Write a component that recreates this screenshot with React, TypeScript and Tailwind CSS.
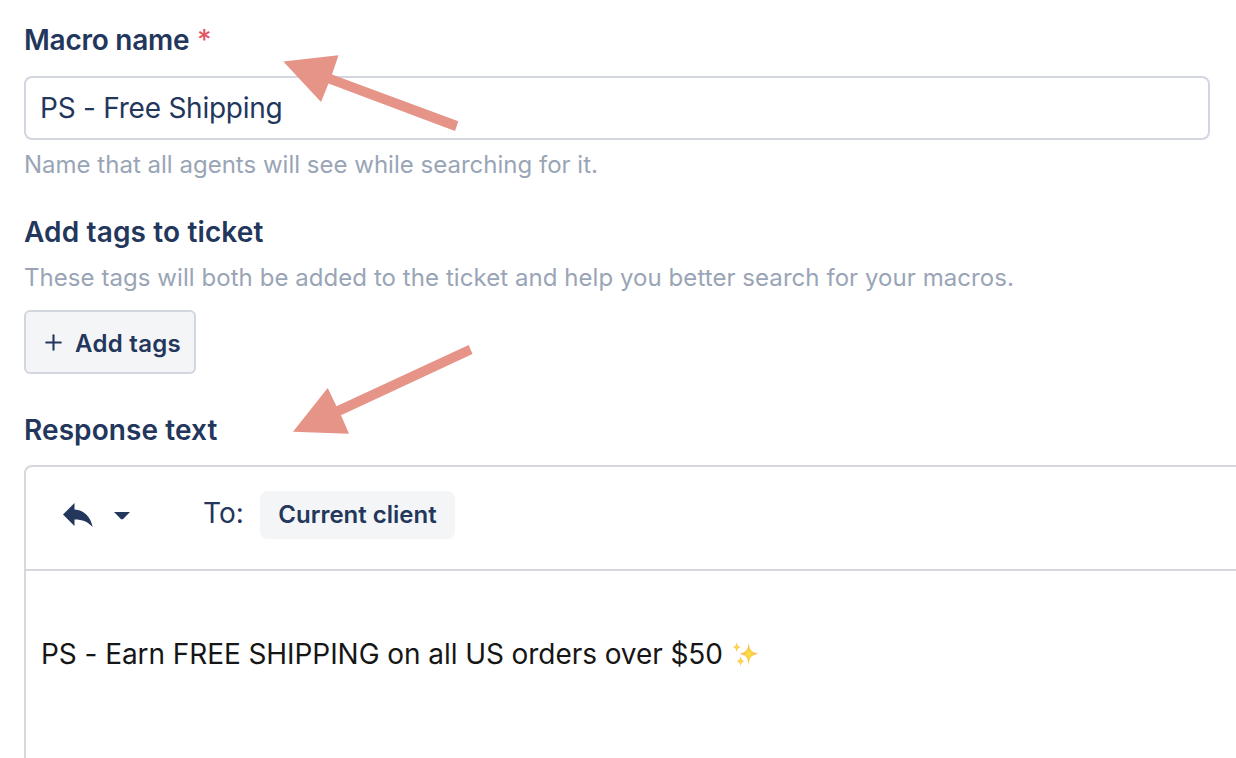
import { Plus } from "lucide-react";

function Sparkles() {
  return (
    <svg width="26" height="26" viewBox="0 0 26 26" className="shrink-0" role="img" aria-label="sparkles">
      <defs>
        <radialGradient id="spark">
          <stop offset="0" stopColor="#fde545" />
          <stop offset="0.5" stopColor="#fac748" />
          <stop offset="1" stopColor="#f4ac72" />
        </radialGradient>
      </defs>
      <g fill="url(#spark)">
        <path d="M15.7 1.5C16.4 8.7 17.7 10.8 25.2 12.7C17.7 14.3 16.4 16.5 15.7 24.5C14.9 16.5 13.5 14.3 6.8 12.7C13.5 10.8 14.9 8.7 15.7 1.5Z" />
        <path d="M3.8 0.8C4.2 4.3 4.8 5.3 7.6 6.2C4.8 7.1 4.2 8.1 3.8 11.6C3.3 8.1 2.7 7.1 0.2 6.2C2.7 5.3 3.3 4.3 3.8 0.8Z" />
        <path d="M7.5 15C7.9 18.3 8.7 19.4 11.3 20.3C8.7 21.1 7.9 22.2 7.5 25.8C7.1 22.2 6.3 21.1 3.8 20.3C6.3 19.4 7.1 18.3 7.5 15Z" />
      </g>
    </svg>
  );
}

export default function App() {
  return (
    <div className="relative h-[758px] w-full overflow-hidden bg-white pl-6 pt-5 font-['Inter',sans-serif] text-[#23365b] antialiased [font-variant-ligatures:none]">
      {/* Macro name */}
      <section className="flex flex-col">
        <label htmlFor="macro-name" className="text-[28px] font-semibold leading-10 tracking-[-0.26px]">
          Macro name <span className="ml-px font-medium text-[#e25563]">*</span>
        </label>
        <input
          id="macro-name"
          type="text"
          defaultValue="PS - Free Shipping"
          className="mt-4 h-16 w-[1186px] rounded-lg border-2 border-[#d2d6de] bg-white px-3.5 text-[28px] tracking-[-0.24px] outline-none"
        />
        <p className="mt-[7px] text-2xl leading-9 tracking-[0.01px] text-[#99a5b6]">
          Name that all agents will see while searching for it.
        </p>
      </section>

      {/* Tags */}
      <section className="mt-[29px]">
        <h2 className="text-[28px] font-semibold leading-10 tracking-[0.14px]">Add tags to ticket</h2>
        <p className="mt-2 text-2xl leading-9 tracking-[0.06px] text-[#99a5b6]">
          These tags will both be added to the ticket and help you better search for your macros.
        </p>
        <button className="mt-[14px] flex h-16 w-[172px] items-center rounded-md border-2 border-[#d2d6de] bg-[#f4f5f7] pl-[15px] text-2xl font-semibold">
          <Plus size={25} strokeWidth={2} className="mr-[9px] mt-px shrink-0" />
          <span className="mt-[3px] whitespace-nowrap tracking-[0.3px]">Add tags</span>
        </button>
      </section>

      {/* Response editor */}
      <section className="mt-9">
        <h2 className="text-[28px] font-semibold leading-10 tracking-[0.08px]">Response text</h2>
        <div className="mt-[15px] h-[320px] rounded-tl-lg border-l-2 border-t-2 border-[#d5d8dd]">
          <div className="flex h-[104px] items-center border-b-2 border-[#d5d8dd] pl-[37px]">
            <svg width="30" height="24" viewBox="0 0 30 24" className="mt-[-7px] shrink-0" fill="currentColor">
              <path d="M0 11.5L11.5 0V6.4C21.5 7.2 27.5 13.5 29.6 24C25 18.6 19.6 16.4 11.5 16.4V23Z" />
            </svg>
            <svg width="16" height="8" viewBox="0 0 16 8" className="ml-[21px] mt-[-5px] shrink-0" fill="currentColor">
              <path d="M0 0H16L9.4 6.7Q8 7.9 6.6 6.7Z" />
            </svg>
            <span className="ml-[73px] mt-[-11px] w-10 shrink-0 whitespace-nowrap text-[28px] leading-10">To:</span>
            <span className="ml-[17px] mt-[-7px] flex h-12 w-[195px] items-center justify-center rounded-lg bg-[#f4f5f7] text-2xl font-semibold">
              Current client
            </span>
          </div>
          <div className="flex items-center pl-[15px] pt-[63px] text-[28px] leading-10 tracking-[-0.07px] text-[#161616]">
            <span className="mr-2.5">PS - Earn FREE SHIPPING on all US orders over $50</span>
            <Sparkles />
          </div>
        </div>
      </section>

      {/* Annotation arrows */}
      <svg width="1236" height="758" viewBox="0 0 1236 758" className="pointer-events-none absolute left-0 top-0" fill="#e69388">
        <path d="M283.3 61.5L338.5 55.3L332 74.5L458.3 121.3L455 131L328.5 83.5L321 102Z" />
        <path d="M293 431.8L327.7 388L336.5 406.2L468.7 345L472.5 354L341 415.2L349 433.8Z" />
      </svg>
    </div>
  );
}
